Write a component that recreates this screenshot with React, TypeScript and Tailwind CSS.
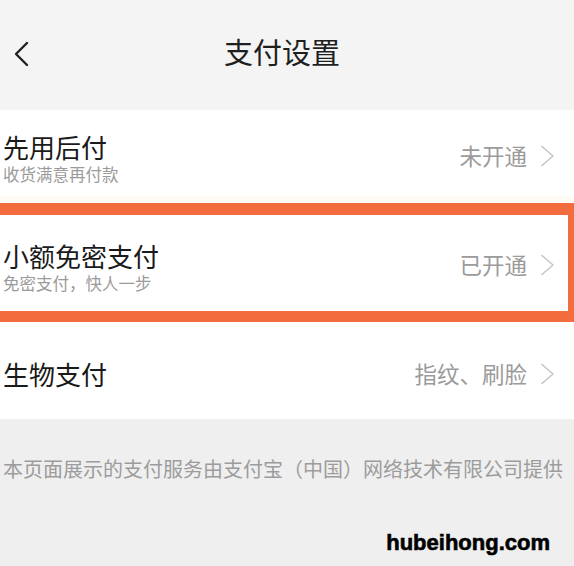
import React from 'react';

const font = { fontFamily: '"Liberation Sans", "Noto Sans CJK SC", sans-serif' };

const Chevron: React.FC<{ className?: string }> = ({ className }) => (
  <svg viewBox="0 0 15 22" className={className} fill="none" stroke="currentColor" strokeWidth={1.6} strokeLinecap="round" strokeLinejoin="round">
    <path d="M2 1.5 L13 11 L2 20.5" />
  </svg>
);

const RowValue: React.FC<{ value: string; className?: string }> = ({ value, className }) => (
  <div className={`flex items-center gap-[13px] pr-[19px] ${className ?? ''}`}>
    <span className="text-[22.5px] leading-[22px] text-[#9b9b9b] pt-[4px]">{value}</span>
    <Chevron className="w-[15px] h-[22px] text-[#c6c6c6]" />
  </div>
);

const RowLabel: React.FC<{ title: string; sub?: string; className?: string }> = ({ title, sub, className }) => (
  <div className={`pl-[3px] ${className ?? ''}`}>
    <div className="text-[26px] leading-[30px] text-[#1a1a1a]">{title}</div>
    {sub && <div className="mt-[1px] text-[16.5px] leading-[20px] text-[#9a9a9a]">{sub}</div>}
  </div>
);

export default function App() {
  return (
    <div className="w-[574px] h-[566px] overflow-hidden bg-[#efefef] flex flex-col" style={font}>
      <header className="relative h-[110px] shrink-0 bg-[#f4f4f4] flex items-center justify-center pb-[2px] pr-[10px]">
        <svg viewBox="0 0 16 26" className="absolute left-[13px] top-[41px] w-[16px] h-[26px] text-[#222]" fill="none" stroke="currentColor" strokeWidth={2.4} strokeLinecap="round" strokeLinejoin="round">
          <path d="M14 2 L3 13 L14 24" />
        </svg>
        <h1 className="text-[29px] leading-none font-normal text-[#1f1f1f]">支付设置</h1>
      </header>

      <div className="h-[86px] bg-white flex items-start justify-between">
        <RowLabel title="先用后付" sub="收货满意再付款" className="mt-[24px]" />
        <RowValue value="未开通" className="mt-[33px]" />
      </div>

      <div className="h-[7px] bg-[#fdfbf4]" />

      <div className="h-[119px] border-t-[12px] border-b-[11px] border-r-[6px] border-[#f26c3e] bg-white flex items-start justify-between">
        <RowLabel title="小额免密支付" sub="免密支付，快人一步" className="mt-[28px]" />
        <RowValue value="已开通" className="mt-[37px] mr-[-6px]" />
      </div>

      <div className="h-[97px] bg-white flex items-start justify-between">
        <RowLabel title="生物支付" className="mt-[39px]" />
        <RowValue value="指纹、刷脸" className="mt-[39px]" />
      </div>

      <footer className="flex-1 flex flex-col">
        <p className="pl-[3px] mt-[39px] text-[20px] leading-[24px] text-[#9c9c9c] whitespace-nowrap">
          本页面展示的支付服务由支付宝（中国）网络技术有限公司提供
        </p>
        <div className="mt-[50px] pr-[24px] text-right">
          <span className="text-[22px] leading-[22px] font-bold text-black [-webkit-text-stroke:0.6px_black]">
            hubeihong.com
          </span>
        </div>
      </footer>
    </div>
  );
}
